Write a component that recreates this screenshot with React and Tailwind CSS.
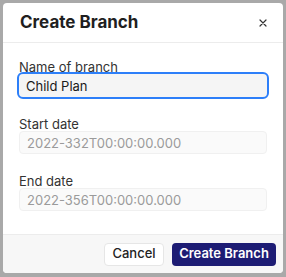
import React from 'react';

const Field = ({ label, value, focused }) => (
  <div className="flex flex-col">
    <label className="text-[13px] leading-[14px] text-[#333]">{label}</label>
    {focused ? (
      <input
        readOnly
        value={value}
        className="h-[23px] rounded-[4px] bg-[#f5f5f5] px-[7px] text-[13px] text-[#1a1a1a] outline-2 outline-[#2d7ff9] outline-offset-0"
        style={{ outlineStyle: 'solid' }}
      />
    ) : (
      <input
        disabled
        value={value}
        className="h-[23px] rounded-[4px] bg-[#fafafa] border border-[#f0f0f0] px-[7px] text-[13px] text-[#9b9b9b]"
      />
    )}
  </div>
);

export default function App() {
  return (
    <div
      className="w-[286px] h-[277px] bg-[#a9a9a9] pt-[3px] pl-[3px]"
      style={{ fontFamily: 'Inter, "Noto Sans", sans-serif' }}
    >
      <div className="w-[280px] h-[270px] bg-white rounded-[4px] overflow-hidden flex flex-col">
        {/* Header */}
        <div className="h-[40px] flex items-center justify-between pl-[17px] pr-[16px] border-b border-[#ececec]">
          <h2 className="text-[17px] font-bold text-[#1f1f1f]">Create Branch</h2>
          <svg width="8" height="8" viewBox="0 0 8 8" className="text-[#333]">
            <path d="M1 1 L7 7 M7 1 L1 7" stroke="currentColor" strokeWidth="1.2" strokeLinecap="round" />
          </svg>
        </div>

        {/* Body */}
        <div className="flex-1 px-[16px] pt-[17px] flex flex-col gap-[20px]">
          <Field label="Name of branch" value="Child Plan" focused />
          <Field label="Start date" value="2022-332T00:00:00.000" />
          <Field label="End date" value="2022-356T00:00:00.000" />
        </div>

        {/* Footer */}
        <div className="h-[39px] bg-[#f7f7f7] border-t border-[#ececec] flex items-center justify-end gap-[8px] pr-[7px]">
          <button className="h-[23px] w-[60px] rounded-[4px] bg-white border border-[#e6e6e6] text-[13px] font-medium text-[#222]">
            Cancel
          </button>
          <button className="h-[23px] w-[104px] rounded-[4px] bg-[#1d1c74] text-[13px] font-semibold text-white">
            Create Branch
          </button>
        </div>
      </div>
    </div>
  );
}
